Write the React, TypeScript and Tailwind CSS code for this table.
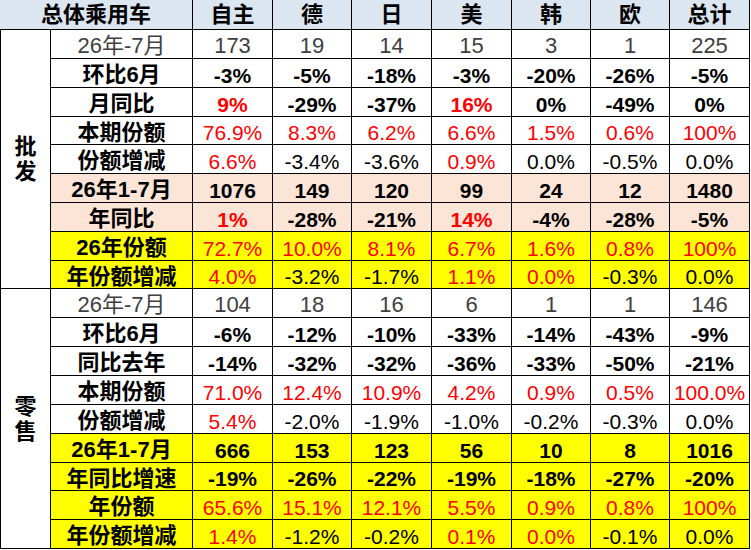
import React from "react";

type Row = {
  label: string;
  vals: string[];
  red: boolean[];
  bg: "white" | "pink" | "yellow";
  kind: "light" | "bold" | "share";
};

const R = (s: string) => s.split("").map((c) => c === "1");

const wholesale: Row[] = [
  { label: "26年-7月", vals: ["173", "19", "14", "15", "3", "1", "225"], red: R("0000000"), bg: "white", kind: "light" },
  { label: "环比6月", vals: ["-3%", "-5%", "-18%", "-3%", "-20%", "-26%", "-5%"], red: R("0000000"), bg: "white", kind: "bold" },
  { label: "月同比", vals: ["9%", "-29%", "-37%", "16%", "0%", "-49%", "0%"], red: R("1001000"), bg: "white", kind: "bold" },
  { label: "本期份额", vals: ["76.9%", "8.3%", "6.2%", "6.6%", "1.5%", "0.6%", "100%"], red: R("1111111"), bg: "white", kind: "share" },
  { label: "份额增减", vals: ["6.6%", "-3.4%", "-3.6%", "0.9%", "0.0%", "-0.5%", "0.0%"], red: R("1001000"), bg: "white", kind: "share" },
  { label: "26年1-7月", vals: ["1076", "149", "120", "99", "24", "12", "1480"], red: R("0000000"), bg: "pink", kind: "bold" },
  { label: "年同比", vals: ["1%", "-28%", "-21%", "14%", "-4%", "-28%", "-5%"], red: R("1001000"), bg: "pink", kind: "bold" },
  { label: "26年份额", vals: ["72.7%", "10.0%", "8.1%", "6.7%", "1.6%", "0.8%", "100%"], red: R("1111111"), bg: "yellow", kind: "share" },
  { label: "年份额增减", vals: ["4.0%", "-3.2%", "-1.7%", "1.1%", "0.0%", "-0.3%", "0.0%"], red: R("1001100"), bg: "yellow", kind: "share" },
];

const retail: Row[] = [
  { label: "26年-7月", vals: ["104", "18", "16", "6", "1", "1", "146"], red: R("0000000"), bg: "white", kind: "light" },
  { label: "环比6月", vals: ["-6%", "-12%", "-10%", "-33%", "-14%", "-43%", "-9%"], red: R("0000000"), bg: "white", kind: "bold" },
  { label: "同比去年", vals: ["-14%", "-32%", "-32%", "-36%", "-33%", "-50%", "-21%"], red: R("0000000"), bg: "white", kind: "bold" },
  { label: "本期份额", vals: ["71.0%", "12.4%", "10.9%", "4.2%", "0.9%", "0.5%", "100.0%"], red: R("1111111"), bg: "white", kind: "share" },
  { label: "份额增减", vals: ["5.4%", "-2.0%", "-1.9%", "-1.0%", "-0.2%", "-0.3%", "0.0%"], red: R("1000000"), bg: "white", kind: "share" },
  { label: "26年1-7月", vals: ["666", "153", "123", "56", "10", "8", "1016"], red: R("0000000"), bg: "yellow", kind: "bold" },
  { label: "年同比增速", vals: ["-19%", "-26%", "-22%", "-19%", "-18%", "-27%", "-20%"], red: R("0000000"), bg: "yellow", kind: "bold" },
  { label: "年份额", vals: ["65.6%", "15.1%", "12.1%", "5.5%", "0.9%", "0.8%", "100%"], red: R("1111111"), bg: "yellow", kind: "share" },
  { label: "年份额增减", vals: ["1.4%", "-1.2%", "-0.2%", "0.1%", "0.0%", "-0.1%", "0.0%"], red: R("1001100"), bg: "yellow", kind: "share" },
];

const headers = ["自主", "德", "日", "美", "韩", "欧", "总计"];

const bgClass = (bg: Row["bg"]) =>
  bg === "pink" ? "bg-[#fce4d6]" : bg === "yellow" ? "bg-[#ffff00]" : "bg-white";

function Cells({ row }: { row: Row }) {
  const bg = bgClass(row.bg);
  const labelCls =
    row.kind === "light"
      ? "text-[#404040] font-normal"
      : "text-black font-bold";
  return (
    <>
      <div className={`${bg} border-r border-b border-black flex items-center justify-center pt-1 text-[22px] leading-none ${labelCls}`}>
        {row.label}
      </div>
      {row.vals.map((v, i) => {
        const color = row.red[i] ? "text-[#ff0000]" : row.kind === "light" ? "text-[#404040]" : "text-black";
        const weight = row.kind === "bold" ? "font-bold" : "font-normal";
        const size = row.kind === "light" ? "text-[22px]" : "text-[21px]";
        return (
          <div
            key={i}
            className={`${bg} border-r border-b border-black flex items-center justify-center pt-1 leading-none ${size} ${color} ${weight}`}
          >
            {v}
          </div>
        );
      })}
    </>
  );
}

function Group({ title, rows }: { title: string; rows: Row[] }) {
  return (
    <>
      <div className="row-span-9 bg-white border-l border-r border-b border-black flex flex-col items-center justify-center text-[22px] font-bold leading-[25px] text-black">
        {title.split("").map((c) => (
          <span key={c}>{c}</span>
        ))}
      </div>
      {rows.map((r, i) => (
        <Cells key={i} row={r} />
      ))}
    </>
  );
}

export default function App() {
  return (
    <div className="w-[751px] h-[550px] bg-white font-['Liberation_Sans','Noto_Sans_CJK_SC',sans-serif]">
      <div className="grid w-[750px] grid-cols-[51px_142px_80px_79px_80px_80px_79px_79px_80px] grid-rows-[30px_29px_29px_29px_28px_29px_29px_29px_29px_28px_29px_29px_29px_29px_29px_29px_28px_29px_29px]">
        <div className="col-span-2 bg-[#dce6f1] border-r border-b border-black flex items-center justify-center text-[22px] font-bold leading-none text-black">
          总体乘用车
        </div>
        {headers.map((h) => (
          <div
            key={h}
            className="bg-[#dce6f1] border-r border-b border-black flex items-center justify-center text-[22px] font-bold leading-none text-black"
          >
            {h}
          </div>
        ))}
        <Group title="批发" rows={wholesale} />
        <Group title="零售" rows={retail} />
      </div>
    </div>
  );
}
